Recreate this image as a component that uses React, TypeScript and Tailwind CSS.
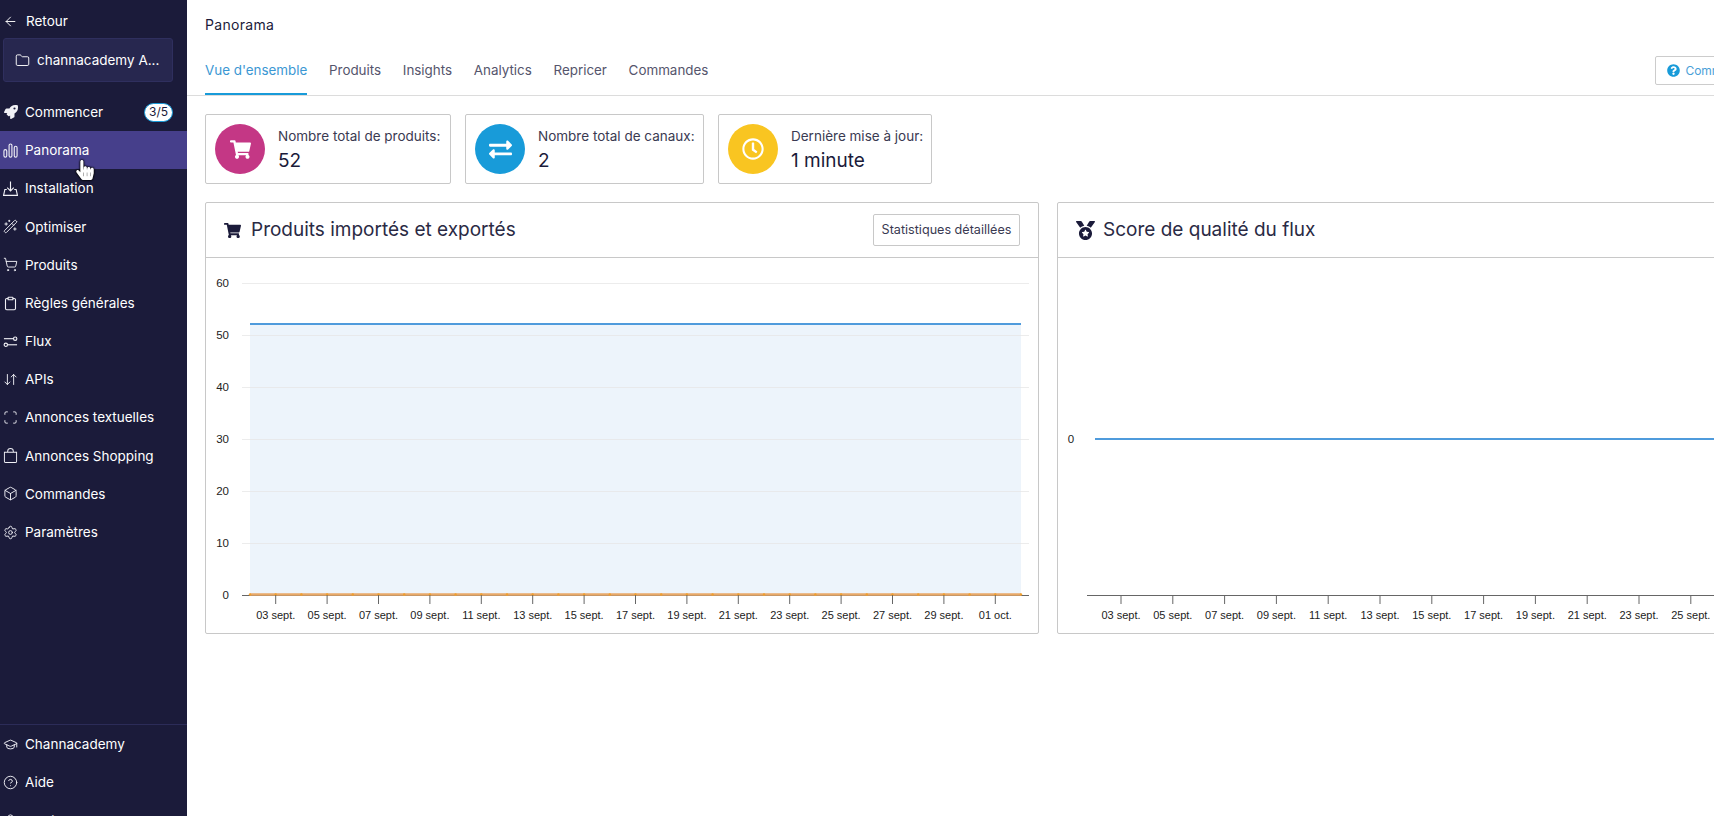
import type { ReactNode } from "react";
import { ArrowDownUp, ArrowLeft, Box, CircleHelp, Clipboard, Folder, GraduationCap, Scan, Settings, ShoppingCart, User, WandSparkles } from "lucide-react";
import { BsBag } from "react-icons/bs";
import { FaExchangeAlt, FaHandPointer, FaMedal, FaQuestionCircle, FaRegClock, FaRocket, FaShoppingCart } from "react-icons/fa";

const FluxIcon = () => (
  <svg width="15" height="15" viewBox="0 0 16 16" fill="none" stroke="currentColor" strokeWidth="1.2">
    <path d="M1 5h10" />
    <circle cx="13" cy="5" r="1.8" />
    <path d="M5 11.5h10" />
    <circle cx="3" cy="11.5" r="1.8" />
  </svg>
);

const BarsIcon = () => (
  <svg width="15" height="15" viewBox="0 0 16 16" fill="none" stroke="currentColor" strokeWidth="1.2">
    <rect x="1" y="7" width="3" height="8" rx="1.5" />
    <rect x="6.5" y="1" width="3" height="14" rx="1.5" />
    <rect x="12" y="3.5" width="3" height="11.5" rx="1.5" />
  </svg>
);

const InstallIcon = () => (
  <svg width="15" height="15" viewBox="0 0 16 16" fill="none" stroke="currentColor" strokeWidth="1.2">
    <path d="M8 0.5v10M4.5 7l3.5 3.5L11.500 7" />
    <path d="M4 9H2L0.600 15.300h14.800L14 9h-2" />
  </svg>
);

const navItems: { label: string; icon: ReactNode; active?: boolean; badge?: string }[] = [
  { label: "Commencer", icon: <FaRocket size={14} />, badge: "3/5" },
  { label: "Panorama", icon: <BarsIcon />, active: true },
  { label: "Installation", icon: <InstallIcon /> },
  { label: "Optimiser", icon: <WandSparkles size={15} strokeWidth={1.5} /> },
  { label: "Produits", icon: <ShoppingCart size={15} strokeWidth={1.5} /> },
  { label: "Règles générales", icon: <Clipboard size={15} strokeWidth={1.75} /> },
  { label: "Flux", icon: <FluxIcon /> },
  { label: "APIs", icon: <ArrowDownUp size={15} strokeWidth={1.5} /> },
  { label: "Annonces textuelles", icon: <Scan size={15} strokeWidth={1.5} /> },
  { label: "Annonces Shopping", icon: <BsBag size={15} /> },
  { label: "Commandes", icon: <Box size={15} strokeWidth={1.5} /> },
  { label: "Paramètres", icon: <Settings size={15} strokeWidth={1.5} /> },
];

const footerItems = [
  { label: "Channacademy", icon: <GraduationCap size={15} strokeWidth={1.5} /> },
  { label: "Aide", icon: <CircleHelp size={15} strokeWidth={1.5} /> },
  { label: "Accès", icon: <User size={15} strokeWidth={1.5} /> },
];

const tabs = ["Vue d'ensemble", "Produits", "Insights", "Analytics", "Repricer", "Commandes"];

const stats = [
  { label: "Nombre total de produits:", value: "52", color: "bg-[#c43785]", width: "w-[246px]", icon: <FaShoppingCart size={21} /> },
  { label: "Nombre total de canaux:", value: "2", color: "bg-[#189bd9]", width: "w-[239px]", icon: <FaExchangeAlt size={23} /> },
  { label: "Dernière mise à jour:", value: "1 minute", color: "bg-[#f9c521]", width: "w-[214px]", icon: <FaRegClock size={22} /> },
];

const dates = [
  "03 sept.", "05 sept.", "07 sept.", "09 sept.", "11 sept.", "13 sept.", "15 sept.", "17 sept.",
  "19 sept.", "21 sept.", "23 sept.", "25 sept.", "27 sept.", "29 sept.", "01 oct.",
];

const fontChart = "'Liberation Sans', Arial, sans-serif";

// chart coordinates are relative to the svg, which starts at y=258 on the page
const ImportChart = () => {
  const gridY = [25, 77, 129, 181, 233, 285];
  const labels = ["60", "50", "40", "30", "20", "10"];
  const axisY = 337;
  const step = 25.7;
  const startX = 44;
  const endX = startX + step * 30;
  const points = Array.from({ length: 31 }, (_, i) => startX + i * step);
  return (
    <svg width="832" height="375" fontFamily={fontChart}>
      <rect x={startX} y="66" width={endX - startX} height={axisY - 66} fill="#4a90d9" fillOpacity="0.1" />
      {gridY.map((y) => (
        <line key={y} x1="36" x2="823" y1={y + 0.5} y2={y + 0.5} stroke="#e6e6e6" strokeOpacity="0.75" />
      ))}
      {gridY.map((y, i) => (
        <text key={y} x="23" y={y + 3.5} fontSize="11.5" fill="#222" textAnchor="end">
          {labels[i]}
        </text>
      ))}
      <text x="23" y={axisY + 4} fontSize="11.5" fill="#222" textAnchor="end">
        0
      </text>
      <line x1="36" x2="823" y1={axisY + 0.5} y2={axisY + 0.5} stroke="#666" />
      <line x1={startX} x2={endX} y1="66" y2="66" stroke="#4f9bdc" strokeWidth="2" />
      <line x1={startX} x2={endX} y1={axisY - 0.5} y2={axisY - 0.5} stroke="#e8a968" strokeWidth="2.5" />
      {points.map((x) => (
        <circle key={x} cx={x} cy={axisY - 0.5} r="1.2" fill="#f0a030" />
      ))}
      {dates.map((d, i) => {
        const x = startX + step + i * 51.4;
        return (
          <g key={d}>
            <line x1={x} x2={x} y1={axisY} y2={axisY + 9} stroke="#666" />
            <text x={x} y={axisY + 24} fontSize="11" fill="#222" textAnchor="middle">
              {d}
            </text>
          </g>
        );
      })}
    </svg>
  );
};

const QualityChart = () => {
  const axisY = 337;
  return (
    <svg width="832" height="375" fontFamily={fontChart}>
      <text x="13" y="185" fontSize="11.5" fill="#222" textAnchor="middle">
        0
      </text>
      <line x1="37" x2="832" y1="181" y2="181" stroke="#4f9bdc" strokeWidth="2" />
      <line x1="29" x2="832" y1={axisY + 0.5} y2={axisY + 0.5} stroke="#666" />
      {dates.map((d, i) => {
        const x = 63 + i * 51.8;
        return (
          <g key={d}>
            <line x1={x} x2={x} y1={axisY} y2={axisY + 9} stroke="#666" />
            <text x={x} y={axisY + 24} fontSize="11" fill="#222" textAnchor="middle">
              {d}
            </text>
          </g>
        );
      })}
    </svg>
  );
};

const NavRow = ({ label, icon, active, badge }: { label: string; icon: ReactNode; active?: boolean; badge?: string }) => (
  <div className={`relative flex h-[38.2px] shrink-0 items-center pl-[3px] pr-[14px] text-[13.5px] text-white ${active ? "bg-[#463f8b]" : ""}`}>
    <span className="flex w-[15px] justify-center text-[#f1f1f6]">{icon}</span>
    <span className="ml-[7px]">{label}</span>
    {badge && (
      <span className="ml-auto flex h-[19px] w-[29px] items-center justify-center rounded-full border border-[#189bd9] bg-white text-[12px] text-[#1b1b3a]">
        {badge}
      </span>
    )}
    {active && (
      <span className="absolute left-[75px] top-[29px] text-white [filter:drop-shadow(0_0_1px_#000)_drop-shadow(0_0_0.5px_#000)]">
        <FaHandPointer size={20} />
      </span>
    )}
  </div>
);

const App = () => {
  return (
    <div className="flex h-[816px] w-[1714px] overflow-hidden bg-white font-['Inter','Liberation_Sans',sans-serif] text-[#1b1b3a]">
      <aside className="flex h-[816px] w-[187px] shrink-0 flex-col overflow-hidden bg-[#1b1b3a]">
        <div className="flex h-[38px] shrink-0 items-center gap-[8px] pl-[3px] pt-[5px] text-[13.5px] text-white">
          <ArrowLeft size={15} strokeWidth={1.5} />
          <span>Retour</span>
        </div>
        <div className="mx-[3px] flex h-[44px] w-[170px] shrink-0 items-center gap-[7px] rounded-[3px] border border-[#2f2f5e] bg-[#27274f] pl-[11px] text-[13.5px] text-white">
          <Folder size={15} strokeWidth={1.5} />
          <span>channacademy A...</span>
        </div>
        <nav className="mt-[11px] flex shrink-0 flex-col">
          {navItems.map((item) => (
            <NavRow key={item.label} {...item} />
          ))}
        </nav>
        <div className="mt-[173px] flex shrink-0 flex-col border-t border-[#2c2c58]">
          {footerItems.map((item) => (
            <NavRow key={item.label} {...item} />
          ))}
        </div>
      </aside>

      <main className="min-w-0 flex-1 overflow-hidden">
        <div className="h-[96px] border-b border-[#dcdcdc]">
          <div className="flex h-[49px] items-center pl-[18px] text-[14px] tracking-[0.3px]">Panorama</div>
          <div className="flex h-[46px] items-start pl-[18px]">
            <div className="flex gap-[21.700px] text-[13.4px] text-[#55556c]">
              {tabs.map((tab, i) => (
                <div
                  key={tab}
                  className={`flex h-[46px] items-center whitespace-nowrap border-b-2 pb-[5px] pt-[4px] ${i === 0 ? "border-[#189bd9] text-[#3b97d3]" : "border-transparent"}`}
                >
                  {tab}
                </div>
              ))}
            </div>
            <button className="ml-[947px] mt-[7px] flex h-[29px] w-[160px] shrink-0 items-center gap-[5px] rounded-[2px] border border-[#cccccc] pl-[11px] text-left text-[12px] text-[#4a9fd8]">
              <FaQuestionCircle size={13} className="text-[#189bd9]" />
              <span className="whitespace-nowrap">Comment ça marche</span>
            </button>
          </div>
        </div>

        <div className="flex gap-[14px] pl-[18px] pt-[18px]">
          {stats.map((s) => (
            <div key={s.label} className={`flex h-[70px] shrink-0 items-center gap-[13px] rounded-[2px] border border-[#c8c8c8] pl-[9px] ${s.width}`}>
              <div className={`flex h-[50px] w-[50px] shrink-0 items-center justify-center rounded-full text-white ${s.color}`}>{s.icon}</div>
              <div className="pt-[2px]">
                <div className="text-[13.5px] leading-[20px] text-[#3a3a52]">{s.label}</div>
                <div className="mt-[2px] text-[19px] leading-[26px]">{s.value}</div>
              </div>
            </div>
          ))}
        </div>

        <div className="flex w-[1700px] gap-[18px] pl-[18px] pt-[18px]">
          <section className="h-[432px] w-[834px] shrink-0 rounded-[2px] border border-[#c8c8c8]">
            <header className="flex h-[55px] items-center justify-between border-b border-[#c8c8c8] pl-[18px] pr-[18px]">
              <div className="flex items-center gap-[10px]">
                <FaShoppingCart size={17} />
                <h2 className="text-[19px] text-[#2a2a44]">Produits importés et exportés</h2>
              </div>
              <button className="flex h-[32px] w-[147px] items-center justify-center rounded-[2px] border border-[#c8c8c8] text-[12.6px] text-[#3a3a52]">
                Statistiques détaillées
              </button>
            </header>
            <ImportChart />
          </section>
          <section className="h-[432px] w-[834px] shrink-0 rounded-[2px] border border-[#c8c8c8]">
            <header className="flex h-[55px] items-center border-b border-[#c8c8c8] pl-[18px]">
              <div className="flex items-center gap-[8px]">
                <FaMedal size={19} />
                <h2 className="text-[19px] text-[#2a2a44]">Score de qualité du flux</h2>
              </div>
            </header>
            <QualityChart />
          </section>
        </div>
      </main>
    </div>
  );
};

export default App;
